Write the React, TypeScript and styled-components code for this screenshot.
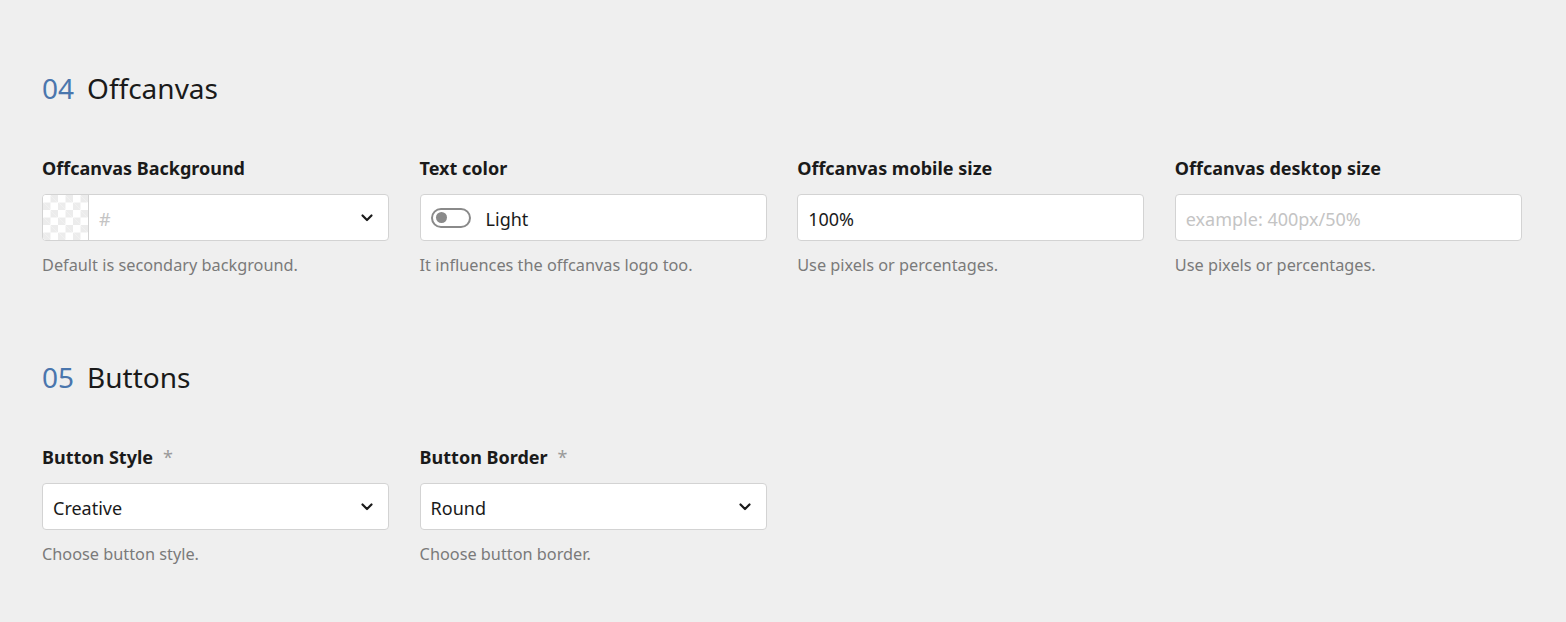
import React from "react";
import styled, { createGlobalStyle } from "styled-components";

const GlobalStyle = createGlobalStyle`
  html, body {
    margin: 0;
    padding: 0;
    background: #efefef;
  }
  body {
    font-family: "Noto Sans", "Open Sans", sans-serif;
    color: #1a1a1a;
  }
`;

const Page = styled.div`
  padding: 71px 44px 40px 42px;
  display: flex;
  flex-direction: column;
  row-gap: 84px;
`;

const Section = styled.section`
  display: flex;
  flex-direction: column;
  row-gap: 51px;
`;

const Heading = styled.h2`
  margin: 0;
  font-size: 28px;
  font-weight: 400;
  line-height: 34px;
  color: #1a1a1a;
  display: flex;
  column-gap: 13px;
`;

const Number = styled.span`
  color: #4a76ad;
`;

const Grid = styled.div`
  display: grid;
  grid-template-columns: repeat(4, 347.3px);
  column-gap: 30.3px;
`;

const Field = styled.div`
  display: flex;
  flex-direction: column;
`;

const Label = styled.label`
  font-size: 18px;
  font-weight: 700;
  line-height: 24px;
  color: #1a1a1a;
  margin-bottom: 14px;
`;

const Required = styled.span`
  color: #9a9a9a;
  font-weight: 400;
  margin-left: 10px;
`;

const Box = styled.div`
  height: 47px;
  box-sizing: border-box;
  background: #fff;
  border: 1px solid #d3d3d3;
  border-radius: 4px;
  display: flex;
  align-items: center;
  overflow: hidden;
`;

const Swatch = styled.div`
  width: 46px;
  box-sizing: border-box;
  align-self: stretch;
  border-right: 1px solid #d3d3d3;
  background-color: #fff;
  background-image:
    linear-gradient(45deg, #ececec 25%, transparent 25%, transparent 75%, #ececec 75%),
    linear-gradient(45deg, #ececec 25%, transparent 25%, transparent 75%, #ececec 75%);
  background-size: 15px 15px;
  background-position: 0 0, 7.5px 7.5px;
`;

const Value = styled.span<{ $placeholder?: boolean }>`
  flex: 1;
  padding: 2px 10px 0;
  font-size: 18px;
  color: ${(p) => (p.$placeholder ? "#c4c4c4" : "#1a1a1a")};
`;

const Chevron = styled.svg`
  width: 14px;
  height: 14px;
  margin-right: 14px;
  flex-shrink: 0;
`;

const Toggle = styled.span`
  width: 40px;
  height: 20px;
  box-sizing: border-box;
  border: 2px solid #8a8a8a;
  border-radius: 10px;
  margin-left: 10px;
  display: flex;
  align-items: center;
  padding-left: 3px;
`;

const Knob = styled.span`
  width: 11px;
  height: 11px;
  border-radius: 50%;
  background: #8a8a8a;
`;

const ToggleText = styled.span`
  font-size: 18px;
  margin-left: 15px;
  padding-top: 2px;
  color: #1a1a1a;
`;

const Help = styled.p`
  margin: 13px 0 0;
  font-size: 16.3px;
  line-height: 22px;
  color: #7a7a7a;
`;

const ChevronIcon = () => (
  <Chevron viewBox="0 0 14 14">
    <path d="M2.5 4.5 L7 9 L11.5 4.5" fill="none" stroke="#1a1a1a" strokeWidth="2.2" strokeLinecap="round" strokeLinejoin="round" />
  </Chevron>
);

export default function App() {
  return (
    <>
      <GlobalStyle />
      <Page>
        <Section>
          <Heading>
            <Number>04</Number>
            <span>Offcanvas</span>
          </Heading>
          <Grid>
            <Field>
              <Label>Offcanvas Background</Label>
              <Box>
                <Swatch />
                <Value $placeholder>#</Value>
                <ChevronIcon />
              </Box>
              <Help>Default is secondary background.</Help>
            </Field>
            <Field>
              <Label>Text color</Label>
              <Box>
                <Toggle>
                  <Knob />
                </Toggle>
                <ToggleText>Light</ToggleText>
              </Box>
              <Help>It influences the offcanvas logo too.</Help>
            </Field>
            <Field>
              <Label>Offcanvas mobile size</Label>
              <Box>
                <Value>100%</Value>
              </Box>
              <Help>Use pixels or percentages.</Help>
            </Field>
            <Field>
              <Label>Offcanvas desktop size</Label>
              <Box>
                <Value $placeholder>example: 400px/50%</Value>
              </Box>
              <Help>Use pixels or percentages.</Help>
            </Field>
          </Grid>
        </Section>
        <Section>
          <Heading>
            <Number>05</Number>
            <span>Buttons</span>
          </Heading>
          <Grid>
            <Field>
              <Label>
                Button Style<Required>*</Required>
              </Label>
              <Box>
                <Value>Creative</Value>
                <ChevronIcon />
              </Box>
              <Help>Choose button style.</Help>
            </Field>
            <Field>
              <Label>
                Button Border<Required>*</Required>
              </Label>
              <Box>
                <Value>Round</Value>
                <ChevronIcon />
              </Box>
              <Help>Choose button border.</Help>
            </Field>
          </Grid>
        </Section>
      </Page>
    </>
  );
}
